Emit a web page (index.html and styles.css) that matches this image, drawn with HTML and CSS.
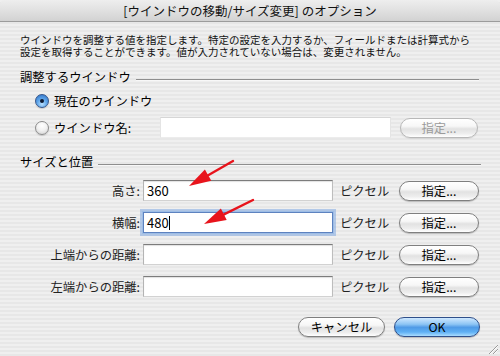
FILE: index.html
```html
<!DOCTYPE html>
<html lang="ja">
<head>
<meta charset="utf-8">
<title>オプション</title>
<link rel="stylesheet" href="styles.css">
</head>
<body>
<div class="window">
  <div class="titlebar">[ウインドウの移動/サイズ変更] のオプション</div>
  <div class="content">
    <p class="desc">ウインドウを調整する値を指定します。特定の設定を入力するか、フィールドまたは計算式から<br>設定を取得することができます。値が入力されていない場合は、変更されません。</p>

    <div class="group-head"><span>調整するウインドウ</span><span class="rule"></span></div>
    <div class="radios">
      <div class="radio-row first">
        <span class="radio on"></span><span class="radio-label">現在のウインドウ</span>
      </div>
      <div class="radio-row">
        <span class="radio"></span><span class="radio-label wide">ウインドウ名:</span>
        <span class="field disabled wname"></span>
        <span class="btn disabled small">指定...</span>
      </div>
    </div>

    <div class="group-head second"><span>サイズと位置</span><span class="rule"></span></div>
    <div class="size-rows">
      <div class="size-row">
        <span class="size-label">高さ:</span>
        <span class="field sfield">360</span>
        <span class="unit">ピクセル</span>
        <span class="btn sbtn">指定...</span>
      </div>
      <div class="size-row">
        <span class="size-label">横幅:</span>
        <span class="field sfield focus">480<span class="caret"></span></span>
        <span class="unit">ピクセル</span>
        <span class="btn sbtn">指定...</span>
      </div>
      <div class="size-row">
        <span class="size-label">上端からの距離:</span>
        <span class="field sfield"></span>
        <span class="unit">ピクセル</span>
        <span class="btn sbtn">指定...</span>
      </div>
      <div class="size-row">
        <span class="size-label">左端からの距離:</span>
        <span class="field sfield"></span>
        <span class="unit">ピクセル</span>
        <span class="btn sbtn">指定...</span>
      </div>
    </div>

    <div class="actions">
      <span class="btn cancel">キャンセル</span>
      <span class="btn ok">OK</span>
    </div>
  </div>

  <svg class="arrows" width="500" height="356" viewBox="0 0 500 356">
    <line x1="233" y1="161" x2="206" y2="176.5" stroke="#e8141c" stroke-width="2.4" stroke-linecap="round"/>
    <polygon points="189,186 204.9,169.4 211.3,180.8" fill="#e8141c"/>
    <line x1="253" y1="200" x2="222" y2="215.3" stroke="#e8141c" stroke-width="2.4" stroke-linecap="round"/>
    <polygon points="204,224 220.9,208.5 226.7,220.1" fill="#e8141c"/>
  </svg>

  <svg class="grip" width="12" height="12" viewBox="0 0 12 12">
    <line x1="2" y1="11" x2="11" y2="2" stroke="#9a9a9a" stroke-width="1"/>
    <line x1="6" y1="11" x2="11" y2="6" stroke="#9a9a9a" stroke-width="1"/>
    <line x1="3" y1="11" x2="11" y2="3" stroke="#ffffff" stroke-width="0.8"/>
    <line x1="7" y1="11" x2="11" y2="7" stroke="#ffffff" stroke-width="0.8"/>
  </svg>
</div>
</body>
</html>
```

FILE: styles.css
```css
html, body {
  margin: 0;
  padding: 0;
}

body {
  font-family: "Noto Sans CJK JP", "Noto Sans", sans-serif;
  color: #000;
  background: #ececec;
}

.window {
  position: relative;
  width: 500px;
  height: 356px;
  overflow: hidden;
  background: repeating-linear-gradient(to bottom, #efefef 0, #efefef 2px, #e7e7e7 2px, #e7e7e7 4px);
}

.titlebar {
  height: 21px;
  line-height: 21px;
  text-align: center;
  font-size: 12.5px;
  color: #111;
  border-bottom: 1px solid #9c9c9c;
  border-radius: 5px 5px 0 0;
  background: linear-gradient(to bottom, #eeeeee 0%, #e2e2e2 45%, #d2d2d2 100%);
}

.content {
  padding: 0 20px;
}

.desc {
  margin: 12px 0 0 0;
  font-size: 10.5px;
  line-height: 12px;
  color: #111;
}

.group-head {
  display: flex;
  align-items: center;
  height: 16px;
  margin-top: 11px;
  font-size: 12.3px;
  line-height: 16px;
}

.group-head.second {
  margin-top: 16px;
}

.group-head .rule {
  flex: 1;
  height: 0;
  margin-left: 5px;
  margin-top: 6px;
  margin-right: 1px;
  border-top: 1px solid #8e8e8e;
  border-bottom: 1px solid #f8f8f8;
}

.group-head.second .rule {
  margin-right: -1px;
}

.radios {
  padding-left: 15px;
}

.radio-row {
  display: flex;
  align-items: center;
  height: 21px;
  margin-top: 6px;
  font-size: 12.3px;
}

.radio-row.first {
  height: 20px;
}

.radio {
  width: 14px;
  height: 14px;
  box-sizing: border-box;
  border-radius: 50%;
  border: 1px solid #8c8c8c;
  background: radial-gradient(circle at 50% 30%, #ffffff 0%, #f2f2f2 45%, #cfcfcf 100%);
  box-shadow: 0 1px 1px rgba(0, 0, 0, 0.15);
  position: relative;
  flex: none;
}

.radio.on {
  border-color: #34568c;
  background: radial-gradient(circle at 50% 75%, #b9e0ff 0%, #5fa6ea 45%, #2c6fc4 100%);
}

.radio.on::after {
  content: "";
  position: absolute;
  left: 4px;
  top: 4px;
  width: 4px;
  height: 4px;
  border-radius: 50%;
  background: #0d1a33;
}

.radio-label {
  margin-left: 5px;
  line-height: 20px;
}

.radio-label.wide {
  width: 106px;
}

.field {
  display: block;
  box-sizing: border-box;
  height: 21px;
  background: #fff;
  border: 1px solid;
  border-color: #7c7c7c #bdbdbd #d2d2d2 #b4b4b4;
  box-shadow: inset 0 1px 1px rgba(0, 0, 0, 0.12);
  font-size: 13px;
  line-height: 19px;
  padding-left: 3px;
}

.field.disabled {
  border-color: #d6d6d6 #e4e4e4 #ececec #e4e4e4;
  box-shadow: none;
}

.wname {
  width: 231px;
}

.btn {
  display: flex;
  align-items: center;
  justify-content: center;
  box-sizing: border-box;
  height: 20px;
  border-radius: 10px;
  border: 1px solid #7f7f7f;
  background: linear-gradient(to bottom, #ffffff 0%, #f7f7f7 40%, #e2e2e2 55%, #ededed 80%, #ffffff 100%);
  box-shadow: 0 1px 1px rgba(0, 0, 0, 0.22);
  font-size: 12.3px;
  line-height: 18px;
  color: #000;
  flex: none;
}

.btn.disabled {
  border-color: #b8b8b8;
  color: #9b9b9b;
  box-shadow: 0 1px 1px rgba(0, 0, 0, 0.08);
}

.btn.small {
  width: 78px;
  margin-left: 9px;
}

.size-rows {
  margin-top: 10px;
  display: flex;
  flex-direction: column;
  gap: 11px;
}

.size-row {
  display: flex;
  align-items: center;
  height: 21px;
  font-size: 12.3px;
}

.size-label {
  width: 120px;
  text-align: right;
  color: #222;
}

.sfield {
  width: 190px;
  margin-left: 3px;
  position: relative;
}

.sfield.focus {
  border-color: #5d82bf;
  box-shadow: 0 0 0 1px #9dbde6, 0 0 0 3px rgba(130, 170, 225, 0.55);
}

.caret {
  display: inline-block;
  width: 1px;
  height: 14px;
  background: #000;
  vertical-align: -2px;
  margin-left: 0;
}

.unit {
  width: 48px;
  margin-left: 7px;
  color: #222;
  white-space: nowrap;
}

.sbtn {
  width: 80px;
  margin-left: 11px;
}

.actions {
  display: flex;
  justify-content: flex-end;
  gap: 9px;
  margin-top: 20px;
}

.cancel {
  width: 87px;
}

.ok {
  width: 86px;
  border-color: #2f4f8a;
  background: linear-gradient(to bottom, #cfe8ff 0%, #8cc4f4 35%, #4f9ae6 52%, #5fb0f4 78%, #a9dcff 100%);
}

.arrows {
  position: absolute;
  left: 0;
  top: 0;
  pointer-events: none;
}

.grip {
  position: absolute;
  right: 1px;
  bottom: 1px;
}
```
